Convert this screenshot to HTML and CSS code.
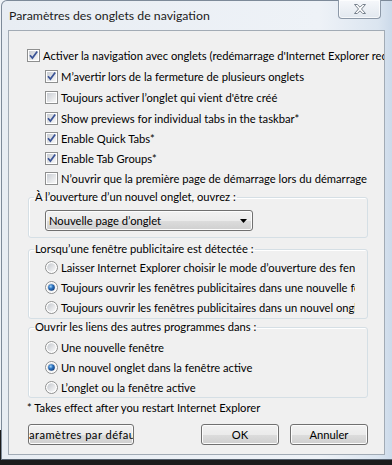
FILE: index.html
```html
<!DOCTYPE html>
<html lang="fr">
<head>
    <meta charset="UTF-8">
    <meta name="viewport" content="width=device-width, initial-scale=1.0">
    <title>Paramètres des onglets de navigation</title>
    <link rel="stylesheet" href="styles.css">
</head>
<body>
    <svg class="defs" width="0" height="0" aria-hidden="true">
        <defs>
            <linearGradient id="boxfill" x1="0" y1="0" x2="1" y2="1">
                <stop offset="0" stop-color="#c9cdd3"/>
                <stop offset="1" stop-color="#f8f8f8"/>
            </linearGradient>
            <linearGradient id="ringfill" x1="0" y1="0" x2="1" y2="1">
                <stop offset="0" stop-color="#c4c8ce"/>
                <stop offset="1" stop-color="#fafafa"/>
            </linearGradient>
            <radialGradient id="dot" cx="0.38" cy="0.35" r="0.7">
                <stop offset="0" stop-color="#a6d6f7"/>
                <stop offset="0.45" stop-color="#2c74c2"/>
                <stop offset="1" stop-color="#153f7a"/>
            </radialGradient>
            <symbol id="cb-off" viewBox="0 0 13 13">
                <rect x="0.5" y="0.5" width="12" height="12" fill="#fff" stroke="#8e8f8f"/>
                <rect x="2" y="2" width="9" height="9" fill="url(#boxfill)"/>
            </symbol>
            <symbol id="cb-on" viewBox="0 0 13 13">
                <rect x="0.5" y="0.5" width="12" height="12" fill="#fff" stroke="#8e8f8f"/>
                <rect x="2" y="2" width="9" height="9" fill="url(#boxfill)"/>
                <path d="M3 6.3l2.4 2.8L10.2 2.6" fill="none" stroke="#3a5396" stroke-width="1.7"/>
            </symbol>
            <symbol id="rd-off" viewBox="0 0 13 13">
                <circle cx="6.5" cy="6.5" r="6" fill="#fff" stroke="#8e8f8f"/>
                <circle cx="6.5" cy="6.5" r="4.3" fill="url(#ringfill)"/>
            </symbol>
            <symbol id="rd-on" viewBox="0 0 13 13">
                <circle cx="6.5" cy="6.5" r="6" fill="#fff" stroke="#8e8f8f"/>
                <circle cx="6.5" cy="6.5" r="4.3" fill="url(#ringfill)"/>
                <circle cx="6.5" cy="6.5" r="3.3" fill="url(#dot)"/>
            </symbol>
        </defs>
    </svg>

    <div class="window">
        <div class="titlebar">
            <span class="title">Paramètres des onglets de navigation</span>
            <div class="close">
                <svg width="12" height="10" viewBox="0 0 12 10">
                    <polygon points="0.5,0.5 3.3,0.5 6,3.2 8.7,0.5 11.5,0.5 7.5,5 11.5,9.5 8.7,9.5 6,6.8 3.3,9.5 0.5,9.5 4.5,5" fill="#fff" stroke="#77808c" stroke-width="1"/>
                </svg>
            </div>
        </div>

        <div class="client">
            <label class="opt lead wide"><svg class="box"><use href="#cb-on"/></svg><span>Activer la navigation avec onglets (redémarrage d'Internet Explorer requis)</span></label>
            <div class="sub">
                <label class="opt"><svg class="box"><use href="#cb-on"/></svg><span>M’avertir lors de la fermeture de plusieurs onglets</span></label>
                <label class="opt"><svg class="box"><use href="#cb-off"/></svg><span>Toujours activer l’onglet qui vient d'être créé</span></label>
                <label class="opt compact"><svg class="box"><use href="#cb-on"/></svg><span>Show previews for individual tabs in the taskbar*</span></label>
                <label class="opt compact"><svg class="box"><use href="#cb-on"/></svg><span>Enable Quick Tabs*</span></label>
                <label class="opt compact"><svg class="box"><use href="#cb-on"/></svg><span>Enable Tab Groups*</span></label>
                <label class="opt long"><svg class="box"><use href="#cb-off"/></svg><span>N’ouvrir que la première page de démarrage lors du démarrage d'Internet Explorer</span></label>
            </div>

            <fieldset class="group group-open">
                <legend>À l’ouverture d’un nouvel onglet, ouvrez :</legend>
                <div class="combo">
                    <span>Nouvelle page d’onglet</span>
                    <svg class="arrow" width="7" height="4" viewBox="0 0 7 4"><polygon points="0,0 7,0 3.5,4" fill="#000"/></svg>
                </div>
            </fieldset>

            <fieldset class="group group-popup">
                <legend>Lorsqu’une fenêtre publicitaire est détectée :</legend>
                <label class="opt"><svg class="box"><use href="#rd-off"/></svg><span>Laisser Internet Explorer choisir le mode d’ouverture des fenêtres publicitaires</span></label>
                <label class="opt"><svg class="box"><use href="#rd-on"/></svg><span>Toujours ouvrir les fenêtres publicitaires dans une nouvelle fenêtre</span></label>
                <label class="opt"><svg class="box"><use href="#rd-off"/></svg><span>Toujours ouvrir les fenêtres publicitaires dans un nouvel onglet</span></label>
            </fieldset>

            <fieldset class="group group-links">
                <legend>Ouvrir les liens des autres programmes dans :</legend>
                <label class="opt"><svg class="box"><use href="#rd-off"/></svg><span>Une nouvelle fenêtre</span></label>
                <label class="opt"><svg class="box"><use href="#rd-on"/></svg><span>Un nouvel onglet dans la fenêtre active</span></label>
                <label class="opt"><svg class="box"><use href="#rd-off"/></svg><span>L’onglet ou la fenêtre active</span></label>
            </fieldset>

            <p class="note">* Takes effect after you restart Internet Explorer</p>

            <div class="actions">
                <div class="btn btn-defaults"><span>Paramètres par défaut</span></div>
                <div class="btn btn-ok">OK</div>
                <div class="btn">Annuler</div>
            </div>
        </div>
    </div>
</body>
</html>
```

FILE: styles.css
```css
* {
    box-sizing: border-box;
}
body {
    margin: 0;
    width: 392px;
    height: 465px;
    overflow: hidden;
    background: linear-gradient(to bottom, #eef2f6 0, #eef2f6 430px, #1b1b1b 430px);
    font-family: Lato, "Liberation Sans", sans-serif;
    font-size: 11.2px;
    color: #000;
}
.defs {
    position: absolute;
    width: 0;
    height: 0;
}
.window {
    width: 398px;
    height: 460px;
    margin-left: 1px;
    padding: 0 6px 0 6px;
    border: 1px solid #7d8a99;
    border-bottom-color: #56616e;
    border-radius: 6px 6px 0 0;
    background: linear-gradient(to right, #e8edf3 0, #eef2f7 80%, #dbe5f0 95%, #c5d5e7 100%);
}
.titlebar {
    height: 29px;
    display: flex;
    align-items: flex-start;
    justify-content: space-between;
    width: 377px;
}
.title {
    margin: 7px 0 0 1px;
    font-size: 12.3px;
    line-height: 16px;
    color: #1c1c1c;
}
.close {
    width: 43px;
    height: 19px;
    margin: -1px 4px 0 0;
    border: 1px solid #8d99a8;
    border-top: none;
    border-radius: 0 0 4px 4px;
    background: linear-gradient(to bottom, #f6f8fb, #e2e8ef);
    box-shadow: inset 0 0 0 1px rgba(255, 255, 255, 0.7);
    display: flex;
    align-items: center;
    justify-content: center;
}
.client {
    width: 377px;
    height: 425px;
    padding: 13px 0 0 18px;
    border: 1px solid #a2abb5;
    background: #f0f0f0;
    overflow: hidden;
}
.opt {
    display: flex;
    align-items: center;
    gap: 3px;
    height: 21px;
    white-space: nowrap;
    overflow: hidden;
}
.opt .box {
    flex: none;
    width: 13px;
    height: 13px;
}
.opt.lead {
    height: 22px;
}
.opt.compact {
    height: 20px;
}
.sub {
    padding-left: 18px;
}
.sub .opt {
    width: 310px;
}
.sub .opt.long {
    width: 323px;
}
.group {
    margin: 0 16px 0 1px;
    padding: 0 0 0 16px;
    border: 1px solid #d5dfe5;
    border-radius: 3px;
    box-shadow: inset 1px 1px 0 #fff;
}
.group legend {
    margin-left: -11px;
    padding: 0 1px;
    line-height: 14px;
}
.group .opt {
    width: 310px;
    height: 20px;
}
.group-open {
    margin-top: 1px;
    padding-top: 6px;
    padding-bottom: 6px;
}
.group-popup {
    margin-top: 4px;
    padding-top: 1px;
    padding-bottom: 1px;
}
.group-links {
    margin-top: 1px;
    padding-top: 3px;
}
.combo {
    width: 208px;
    height: 21px;
    padding: 0 5px 0 3px;
    display: flex;
    align-items: center;
    justify-content: space-between;
    border: 1px solid #707070;
    border-radius: 3px;
    background: linear-gradient(to bottom, #f2f2f2 0, #ebebeb 50%, #dddddd 50%, #cfcfcf 100%);
    box-shadow: inset 0 0 0 1px #fcfcfc;
}
.note {
    margin: 3px 0 0 0;
    line-height: 14px;
}
.actions {
    display: flex;
    gap: 11px;
    margin: 9px 16px 0 1px;
}
.btn {
    width: 78px;
    height: 21px;
    display: flex;
    align-items: center;
    justify-content: center;
    white-space: nowrap;
    overflow: hidden;
    border: 1px solid #707070;
    border-radius: 3px;
    background: linear-gradient(to bottom, #f2f2f2 0, #ebebeb 50%, #dddddd 50%, #cfcfcf 100%);
    box-shadow: inset 0 0 0 1px #fcfcfc;
}
.btn-defaults {
    width: 106px;
}
.btn-defaults span {
    letter-spacing: 0.45px;
}
.btn-ok {
    margin-left: auto;
}
```
